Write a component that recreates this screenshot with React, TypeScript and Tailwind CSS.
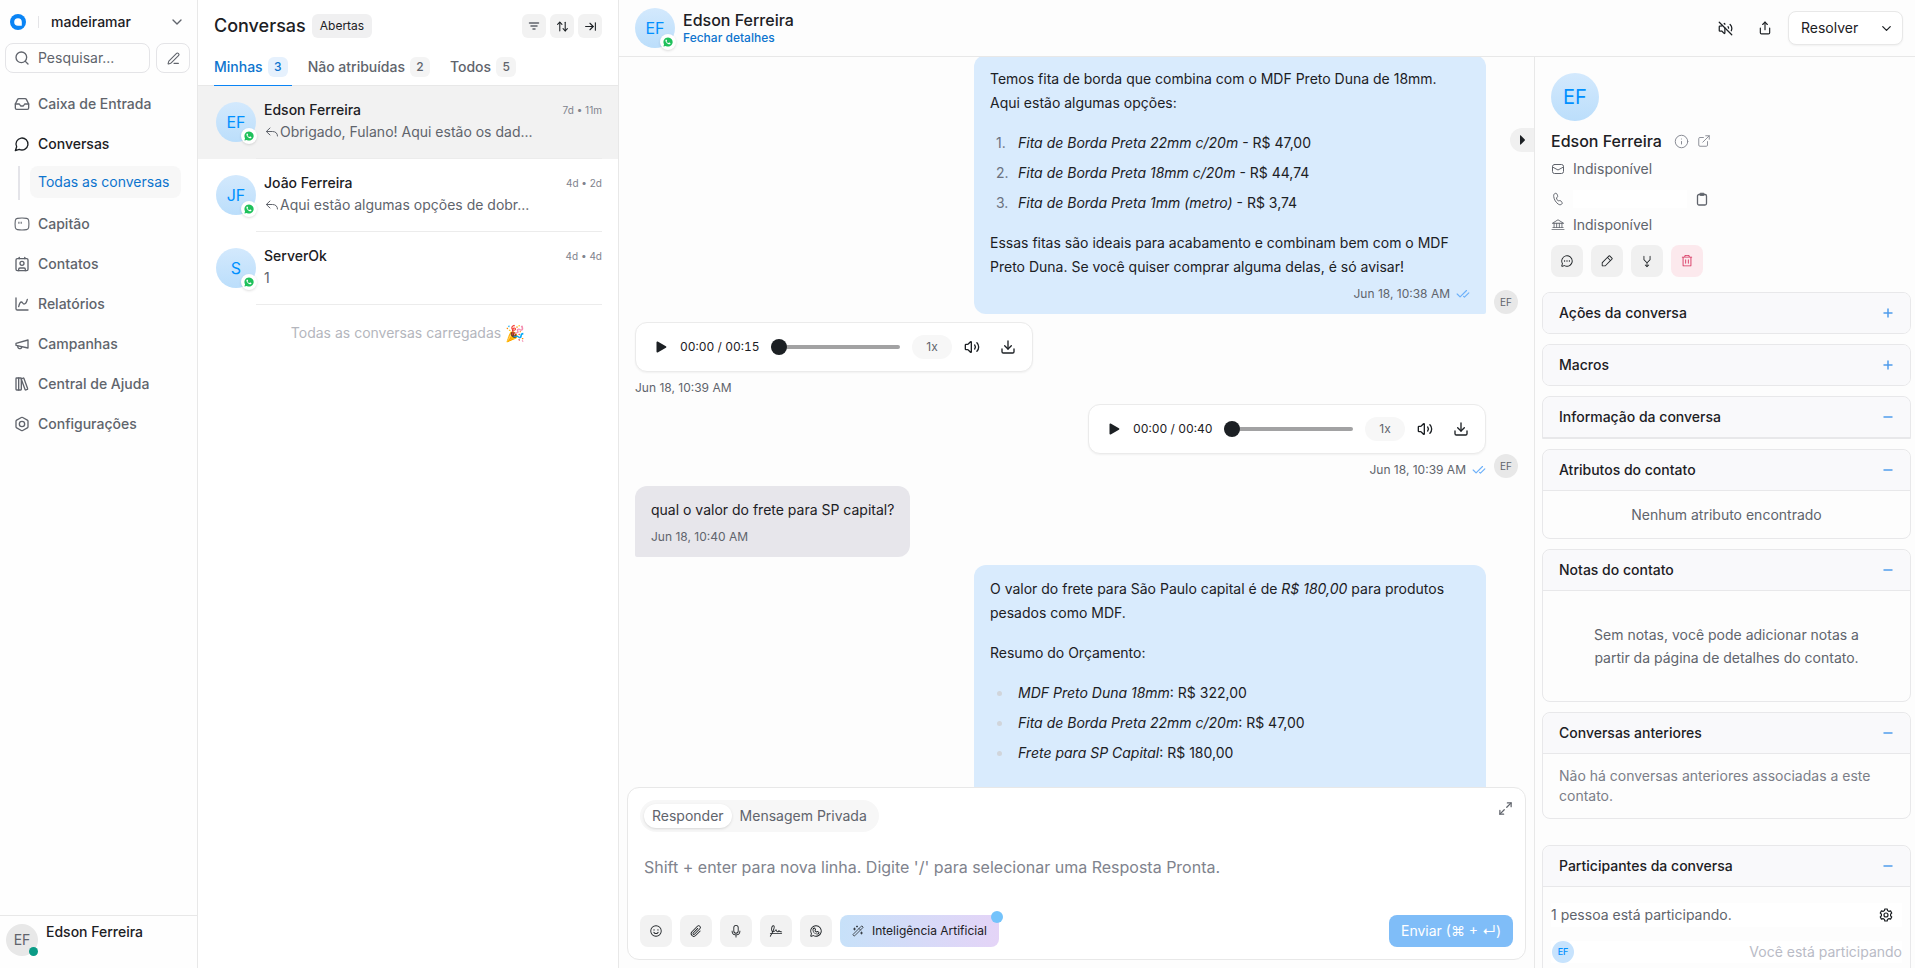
import type { ReactNode } from 'react'
import {
  ArrowRightToLine,
  ArrowUpDown,
  Bolt,
  ChartSpline,
  CheckCheck,
  ChevronDown,
  Contact,
  Download,
  ExternalLink,
  Inbox,
  Info,
  LibraryBig,
  Maximize2,
  PenLine,
  Search,
  Share,
  Volume2,
  VolumeOff,
  WandSparkles,
} from 'lucide-react'
import {
  PiArrowsMerge,
  PiBank,
  PiChatCircleDots,
  PiMicrophone,
  PiPaperclip,
  PiPencilSimple,
  PiSignature,
  PiSmiley,
  PiTrash,
  PiWhatsappLogo,
} from 'react-icons/pi'

/* ---------- icons ---------- */

function LogoIcon() {
  return (
    <svg viewBox="0 0 16 16" className="size-4" aria-hidden="true">
      <circle cx="8" cy="8" r="8" fill="#0a84f5" />
      <path d="M8 4.2a3.8 3.8 0 1 0 0 7.6h3.3a.5.5 0 0 0 .5-.5V8A3.8 3.8 0 0 0 8 4.2z" fill="#fff" />
    </svg>
  )
}

function MessageIcon() {
  return (
    <svg viewBox="0 0 24 24" className="size-4" fill="none" stroke="currentColor" strokeWidth="2" strokeLinecap="round" strokeLinejoin="round">
      <path d="M7.9 20A9 9 0 1 0 4 16.1L2 22Z" />
    </svg>
  )
}

function CaptainIcon() {
  return (
    <svg viewBox="0 0 16 16" className="size-4" fill="none" stroke="currentColor" strokeWidth="1.1">
      <path d="M3.4 2.4C6.4 1.9 9.6 1.9 12.6 2.4c1.2.2 1.9.9 2.1 2.1.3 2.3.3 4.7 0 7-.2 1.2-.9 1.9-2.1 2.1-3 .5-6.2.5-9.2 0-1.2-.2-1.9-.9-2.1-2.1-.3-2.3-.3-4.7 0-7 .2-1.2.9-1.9 2.1-2.1z" />
      <path d="M4.9 5.8v2M7.2 5.800v2" />
    </svg>
  )
}

function MegaphoneIcon() {
  return (
    <svg viewBox="0 0 24 24" className="size-4" fill="none" stroke="currentColor" strokeWidth="2" strokeLinecap="round" strokeLinejoin="round">
      <path d="m3 11 18-5v12L3 14v-3z" />
      <path d="M11.6 16.8a3 3 0 1 1-5.8-1.6" />
    </svg>
  )
}

function FilterIcon() {
  return (
    <svg viewBox="0 0 16 16" className="size-4" fill="none" stroke="currentColor" strokeWidth="1.5" strokeLinecap="round">
      <path d="M3.5 5h9M5 8h6M7 11h2" />
    </svg>
  )
}

function ReplyIcon() {
  return (
    <svg viewBox="0 0 16 16" className="size-4" fill="none" stroke="currentColor" strokeWidth="1" strokeLinecap="round" strokeLinejoin="round">
      <path d="M6 4 2.3 7.5 6 11M2.5 7.5H8.500c3 0 5 1.700 5 4.500" />
    </svg>
  )
}

function WhatsappBadge() {
  return (
    <span className="absolute -right-px -bottom-0.5 flex size-4 items-center justify-center rounded-full bg-white shadow-sm">
      <svg viewBox="0 0 24 24" className="size-2.5" aria-hidden="true">
        <path d="M12 1a11 11 0 0 0-9.5 16.5L1 23l5.6-1.5A11 11 0 1 0 12 1z" fill="#1fc15b" />
        <path d="M8.5 6.5c-.4-.8-1.2-.7-1.8 0-1.1 1.2-1.2 3 .1 5.1 1.5 2.6 3.7 4.7 6.6 5.7 2 .7 3.8.2 4.5-1.7.3-.9.1-1.2-.4-1.5l-2.1-1c-.5-.2-.8-.1-1.1.3l-.8 1c-.3.3-.6.3-1 .1-1.6-.7-2.9-1.9-3.7-3.4-.2-.4-.1-.6.2-.9l.6-.8c.2-.3.2-.6.1-.9z" fill="#fff" />
      </svg>
    </span>
  )
}

function MailIcon() {
  return (
    <svg viewBox="0 0 14 14" className="size-3.5" fill="none" stroke="currentColor" strokeWidth="1" strokeLinecap="round">
      <rect x="1.500" y="2.500" width="11" height="9" rx="2" />
      <path d="M1.5 5 7 8l5.5-3" />
    </svg>
  )
}

function PhoneIcon() {
  return (
    <svg viewBox="0 0 14 14" className="size-3.5" fill="none" stroke="currentColor" strokeWidth="1" strokeLinejoin="round">
      <path d="M4.2 1.4c.9-.3 1.5 0 1.8.8l.6 1.5c.2.6.1 1-.3 1.4l-.9.9c.3 1.2 1 2.2 2 3l1.3-.4c.5-.1 1 .1 1.3.5l.9 1.2c.5.7.4 1.3-.2 1.8-.9.8-2.1.9-3.3.1C4.8 10.4 3.1 7.6 2.7 4.4c-.2-1.5.3-2.6 1.5-3z" />
    </svg>
  )
}

function ClipboardIcon() {
  return (
    <svg viewBox="0 0 14 14" className="size-3.5" fill="none" stroke="currentColor" strokeWidth="1.3" strokeLinejoin="round">
      <rect x="2.5" y="2.5" width="9" height="10.5" rx="1.5" />
      <rect x="4.7" y="1.2" width="4.6" height="2.3" rx="1" fill="currentColor" strokeWidth="0.8" />
    </svg>
  )
}

function GearIcon() {
  return (
    <svg viewBox="0 0 24 24" className="size-4" fill="none" stroke="currentColor" strokeWidth="1.8" strokeLinejoin="round">
      <path d="M9.7 5.3 10.2 3h3.6l.5 2.3 2.2 1.3 2.3-.8 1.8 3.2L18.9 10.7v2.6l1.700 1.700-1.800 3.200-2.300-.8-2.200 1.300-.5 2.300h-3.600l-.5-2.300-2.200-1.300-2.300.8L3.400 15l1.700-1.700v-2.600L3.400 9l1.800-3.200 2.300.8z" />
      <circle cx="12" cy="12" r="3" />
    </svg>
  )
}

/* ---------- shared pieces ---------- */

function Avatar({ initials }: { initials: string }) {
  return (
    <div className="relative flex size-10 shrink-0 items-center justify-center rounded-full bg-gradient-to-b from-[#d3e9fd] to-[#bbdefb] text-base font-[440] text-[#0090ff]">
      {initials}
      <WhatsappBadge />
    </div>
  )
}

function AgentAvatar() {
  return (
    <div className="flex size-6 shrink-0 items-center justify-center rounded-full bg-[#e8e8e8] text-[10px] text-[#60646c]">
      EF
    </div>
  )
}

/* ---------- sidebar ---------- */

const navBefore = [{ label: 'Caixa de Entrada', icon: <Inbox size={16} /> }]

const navAfter = [
  { label: 'Capitão', icon: <CaptainIcon /> },
  { label: 'Contatos', icon: <Contact size={16} /> },
  { label: 'Relatórios', icon: <ChartSpline size={16} /> },
  { label: 'Campanhas', icon: <MegaphoneIcon /> },
  { label: 'Central de Ajuda', icon: <LibraryBig size={16} /> },
  { label: 'Configurações', icon: <Bolt size={16} /> },
]

function NavItem({ label, icon, active }: { label: string; icon: ReactNode; active?: boolean }) {
  return (
    <a
      href="#"
      className={
        active
          ? 'flex h-8 items-center gap-2 px-2 text-sm font-medium text-[#1c2024]'
          : 'flex h-8 items-center gap-2 px-2 text-sm font-medium text-[#60646c]'
      }
    >
      {icon}
      {label}
    </a>
  )
}

function Sidebar() {
  return (
    <aside className="flex w-[198px] shrink-0 flex-col border-r border-[#e8e8e8] bg-[#fefefe]">
      <div className="flex h-11 items-center pr-3 pl-2.5">
        <LogoIcon />
        <span className="mx-3 h-3 w-px bg-[#e4e4e7]" />
        <button type="button" className="flex flex-1 items-center justify-between text-sm font-medium text-[#1c2024]">
          madeiramar
          <ChevronDown size={16} className="text-[#60646c]" />
        </button>
      </div>

      <div className="-mt-px flex gap-1.5 px-[5px]">
        <label className="flex h-[30px] min-w-0 flex-1 items-center gap-2 rounded-lg border border-[#e4e4e7] px-2 text-[#60646c]">
          <Search size={16} className="shrink-0" />
          <input
            type="text"
            aria-label="Pesquisar"
            placeholder="Pesquisar..."
            className="w-full min-w-0 text-sm outline-none placeholder:text-[#60646c]"
          />
        </label>
        <button type="button" aria-label="Nova conversa" className="mr-0.5 flex h-[30px] w-[34px] items-center justify-center rounded-lg border border-[#e4e4e7] text-[#60646c]">
          <PenLine size={13} />
        </button>
      </div>

      <nav className="mt-[15px] flex flex-1 flex-col gap-2 px-1.5">
        {navBefore.map((item) => (
          <NavItem key={item.label} label={item.label} icon={item.icon} />
        ))}
        <div>
          <NavItem label="Conversas" icon={<MessageIcon />} active />
          <div className="mt-1.5 ml-3 flex gap-2.5">
            <span className="h-[34px] w-0.5 bg-[#e4e4e9]" />
            <a href="#" className="flex h-8 items-center rounded-lg bg-[#f7f7f7] px-2 text-sm text-[#0d74ce] whitespace-nowrap">
              <span className="pr-1">Todas as conversas</span>
            </a>
          </div>
        </div>
        {navAfter.map((item) => (
          <NavItem key={item.label} label={item.label} icon={item.icon} />
        ))}
      </nav>

      <div className="flex h-[53px] items-start gap-2 border-t border-[#e8e8e8] px-1.5 pt-2">
        <div className="relative flex size-8 items-center justify-center rounded-full bg-[#e8e8e8] text-sm text-[#60646c]">
          EF
          <span className="absolute right-0 bottom-0 size-[9px] rounded-full bg-[#0a9b86]" />
        </div>
        <span className="text-sm leading-4 font-medium text-[#1c2024]">Edson Ferreira</span>
      </div>
    </aside>
  )
}

/* ---------- conversation list ---------- */

const tabs = [
  { label: 'Minhas', count: 3, active: true },
  { label: 'Não atribuídas', count: 2, active: false },
  { label: 'Todos', count: 5, active: false },
]

const conversations = [
  { initials: 'EF', name: 'Edson Ferreira', time: '7d • 11m', text: 'Obrigado, Fulano! Aqui estão os dad...', reply: true, active: true },
  { initials: 'JF', name: 'João Ferreira', time: '4d • 2d', text: 'Aqui estão algumas opções de dobr...', reply: true, active: false },
  { initials: 'S', name: 'ServerOk', time: '4d • 4d', text: '1', reply: false, active: false },
]

function ConversationList() {
  return (
    <section className="flex w-[421px] shrink-0 flex-col border-r border-[#e8e8e8] bg-white">
      <div className="flex h-[52px] items-center justify-between px-4">
        <div className="flex items-center gap-1.5">
          <h1 className="text-lg font-medium text-[#1c2024]">Conversas</h1>
          <span className="rounded-md bg-[#f0f0f1] px-2 text-xs leading-6 text-[#1c2024]">Abertas</span>
        </div>
        <div className="flex gap-1 text-[#1c2024]">
          <button type="button" aria-label="Filtrar" className="flex size-6 items-center justify-center rounded-md bg-[#f2f2f2] text-[#60646c]">
            <FilterIcon />
          </button>
          <button type="button" aria-label="Ordenar" className="flex size-6 items-center justify-center rounded-md bg-[#f2f2f2]">
            <ArrowUpDown size={13} />
          </button>
          <button type="button" aria-label="Expandir" className="flex size-6 items-center justify-center rounded-md bg-[#f2f2f2]">
            <ArrowRightToLine size={13} />
          </button>
        </div>
      </div>

      <div className="flex gap-4 border-b border-[#e8e8e8] px-4">
        {tabs.map((tab) => (
          <button
            key={tab.label}
            type="button"
            className={
              tab.active
                ? '-mb-px flex h-[34px] items-center gap-[5px] border-b border-[#0a84f5] pt-[5px] pr-1 pb-2 text-sm font-[460] text-[#0d74ce]'
                : '-mb-px flex h-[34px] items-center gap-[5px] border-b border-transparent pt-[5px] pr-1 pb-2 text-sm font-[460] text-[#60646c]'
            }
          >
            {tab.label}
            <span
              className={
                tab.active
                  ? 'flex size-5 items-center justify-center rounded-md bg-[#e6f1fd] text-xs font-medium'
                  : 'flex size-5 items-center justify-center rounded-md bg-[#f4f4f4] text-xs font-medium'
              }
            >
              {tab.count}
            </span>
          </button>
        ))}
      </div>

      <ul>
        {conversations.map((item) => (
          <li
            key={item.name}
            className={item.active ? 'flex h-[73px] bg-[#f2f2f2] pr-4 pl-[18px]' : 'flex h-[73px] pr-4 pl-[18px]'}
          >
            <div className="pt-4">
              <Avatar initials={item.initials} />
            </div>
            <div className="min-w-0 flex-1 border-b border-[#ececec] pt-3.5 pl-2">
              <div className="flex items-center justify-between">
                <h2 className="text-sm leading-5 font-medium text-[#1c2024]">{item.name}</h2>
                <span className="text-[10px] text-[#80838d]">{item.time}</span>
              </div>
              <p className="mt-0.5 flex items-center text-sm leading-5 text-[#60646c]">
                {item.reply && <ReplyIcon />}
                {item.text}
              </p>
            </div>
          </li>
        ))}
      </ul>

      <p className="flex h-6 items-center justify-center gap-1 mt-4 text-sm text-[#b4b6bd]">
        Todas as conversas carregadas
        <span className="text-base">🎉</span>
      </p>
    </section>
  )
}

/* ---------- chat ---------- */

function Timestamp({ time, read }: { time: string; read?: boolean }) {
  return (
    <span className="flex items-center gap-1.5 text-xs leading-4 text-[#60646c]">
      {time}
      {read && <CheckCheck size={14} className="text-[#6db1fa]" />}
    </span>
  )
}

function AudioPlayer({ duration }: { duration: string }) {
  return (
    <div className="flex h-[50px] w-[398px] items-center gap-3 rounded-xl border border-[#ebebeb] bg-white px-4 text-[#1c2024] shadow-xs">
      <button type="button" aria-label="Reproduzir">
        <svg viewBox="0 0 16 16" className="size-4" fill="currentColor">
          <path d="M4.5 3.2c0-.6.6-1 1.2-.7l8.2 4.700c.6.300.6 1.200 0 1.500l-8.200 4.700c-.6.300-1.200-.1-1.200-.7z" />
        </svg>
      </button>
      <span className="text-xs whitespace-nowrap tabular-nums">00:00 / {duration}</span>
      <input
        type="range"
        aria-label="Posição do áudio"
        defaultValue={0}
        className="h-4 min-w-0 flex-1 appearance-none bg-transparent [&::-webkit-slider-runnable-track]:h-1 [&::-webkit-slider-runnable-track]:rounded-full [&::-webkit-slider-runnable-track]:bg-[#a2a2a3] [&::-webkit-slider-thumb]:-mt-1.5 [&::-webkit-slider-thumb]:size-4 [&::-webkit-slider-thumb]:appearance-none [&::-webkit-slider-thumb]:rounded-full [&::-webkit-slider-thumb]:bg-[#1c2024]"
      />
      <button type="button" className="h-6 w-10 rounded-full bg-[#f7f7f7] text-xs text-[#60646c]">
        1x
      </button>
      <button type="button" aria-label="Volume">
        <Volume2 size={16} />
      </button>
      <button type="button" aria-label="Baixar" className="ml-2">
        <Download size={16} />
      </button>
    </div>
  )
}

const borderOptions = [
  { name: 'Fita de Borda Preta 22mm c/20m', price: 'R$ 47,00' },
  { name: 'Fita de Borda Preta 18mm c/20m', price: 'R$ 44,74' },
  { name: 'Fita de Borda Preta 1mm (metro)', price: 'R$ 3,74' },
]

const budget = [
  { name: 'MDF Preto Duna 18mm', price: 'R$ 322,00' },
  { name: 'Fita de Borda Preta 22mm c/20m', price: 'R$ 47,00' },
  { name: 'Frete para SP Capital', price: 'R$ 180,00' },
]

function Messages() {
  return (
    <div className="flex min-h-0 flex-1 flex-col justify-end gap-2 overflow-hidden px-4 text-sm leading-6 text-[#1c2024]">
      <div className="flex shrink-0 items-end justify-end gap-2">
        <div className="w-full max-w-lg rounded-xl rounded-br-xs bg-[#d9ebfd] px-4 py-3">
          <div className="flex flex-col gap-4">
            <p>Temos fita de borda que combina com o MDF Preto Duna de 18mm. Aqui estão algumas opções:</p>
            <ol className="flex list-none flex-col gap-1.5">
              {borderOptions.map((item, index) => (
                <li key={item.name} className="flex pl-1.5">
                  <span className="w-[22px] text-[#6b7280]">{index + 1}.</span>
                  <span>
                    <em>{item.name}</em> - {item.price}
                  </span>
                </li>
              ))}
            </ol>
            <p>Essas fitas são ideais para acabamento e combinam bem com o MDF Preto Duna. Se você quiser comprar alguma delas, é só avisar!</p>
          </div>
          <div className="mt-[7px] flex justify-end">
            <Timestamp time="Jun 18, 10:38 AM" read />
          </div>
        </div>
        <AgentAvatar />
      </div>

      <div className="flex shrink-0 flex-col items-start gap-2">
        <AudioPlayer duration="00:15" />
        <Timestamp time="Jun 18, 10:39 AM" />
      </div>

      <div className="flex shrink-0 items-end justify-end gap-2">
        <div className="flex flex-col items-end gap-2">
          <AudioPlayer duration="00:40" />
          <Timestamp time="Jun 18, 10:39 AM" read />
        </div>
        <AgentAvatar />
      </div>

      <div className="shrink-0 self-start rounded-xl rounded-bl-xs bg-[#e7e6eb] px-4 py-3">
        <p>qual o valor do frete para SP capital?</p>
        <div className="mt-[7px]">
          <Timestamp time="Jun 18, 10:40 AM" />
        </div>
      </div>

      <div className="mr-8 flex w-full max-w-lg shrink-0 flex-col gap-4 self-end rounded-t-xl bg-[#d9ebfd] px-4 pt-3 pb-[22px]">
        <p>
          O valor do frete para São Paulo capital é de <em>R$ 180,00</em> para produtos pesados como MDF.
        </p>
        <p>Resumo do Orçamento:</p>
        <ul className="flex flex-col gap-1.5">
          {budget.map((item) => (
            <li key={item.name} className="flex items-center pl-[7px]">
              <span className="mr-4 size-[5px] rounded-full bg-[#d1d5db]" />
              <span>
                <em>{item.name}</em>: {item.price}
              </span>
            </li>
          ))}
        </ul>
      </div>
    </div>
  )
}

const composerTools = [
  { label: 'Emoji', icon: <PiSmiley size={14} /> },
  { label: 'Anexar arquivo', icon: <PiPaperclip size={14} /> },
  { label: 'Gravar áudio', icon: <PiMicrophone size={14} /> },
  { label: 'Assinatura', icon: <PiSignature size={14} /> },
  { label: 'Modelos do WhatsApp', icon: <PiWhatsappLogo size={14} /> },
]

function Composer() {
  return (
    <div className="mx-2 mb-2 flex flex-col rounded-xl border border-[#e8e8e8] bg-white p-3">
      <div className="flex items-start justify-between">
        <div className="flex h-8 items-center rounded-full bg-[#f7f7f7] p-1 pr-3 text-sm font-[440] text-[#60646c]">
          <button type="button" className="h-6 rounded-full bg-white px-2 shadow-sm">
            Responder
          </button>
          <button type="button" className="h-6 pl-2">
            Mensagem Privada
          </button>
        </div>
        <button type="button" aria-label="Expandir editor" className="mt-px text-[#60646c]">
          <Maximize2 size={15} />
        </button>
      </div>
      <textarea
        aria-label="Mensagem"
        rows={2}
        placeholder="Shift + enter para nova linha. Digite '/' para selecionar uma Resposta Pronta."
        className="mt-[23px] mb-3 h-12 w-full resize-none px-1 text-base leading-6 text-[#1c2024] outline-none placeholder:text-[#80838d]"
      />
      <div className="flex items-center justify-between">
        <div className="flex gap-2">
          {composerTools.map((tool) => (
            <button
              key={tool.label}
              type="button"
              aria-label={tool.label}
              className="flex size-8 items-center justify-center rounded-lg bg-[#f2f2f2] text-[#1c2024]"
            >
              {tool.icon}
            </button>
          ))}
          <button
            type="button"
            className="relative flex h-8 items-center gap-2 rounded-lg bg-gradient-to-r from-[#c7e1f9] to-[#e4d4f7] px-3 text-xs font-[440] text-[#1c2024]"
          >
            <WandSparkles size={12} strokeWidth={1.5} />
            Inteligência Artificial
            <span className="absolute -top-1 -right-1 size-3 rounded-full bg-[#74c3fb]" />
          </button>
        </div>
        <button type="button" className="h-8 rounded-lg bg-[#7fbdf8] px-3 text-sm text-white">
          Enviar (⌘ + ↵)
        </button>
      </div>
    </div>
  )
}

/* ---------- contact details ---------- */

function Accordion({ title, open, children }: { title: string; open?: boolean; children?: ReactNode }) {
  return (
    <div
      className={
        open && !children
          ? 'rounded-t-lg border border-[#e8e8ea] bg-[#f9f9fb]'
          : 'overflow-hidden rounded-lg border border-[#e8e8ea] bg-[#fdfdfd]'
      }
    >
      <button
        type="button"
        aria-expanded={!!open}
        className={
          open
            ? 'flex h-[41px] w-full items-center justify-between rounded-t-lg border-b border-[#e8e8ea] bg-[#f9f9fb] px-4 text-sm font-medium text-[#1c2024]'
            : 'flex h-10 w-full items-center justify-between bg-[#f9f9fb] px-4 text-sm font-medium text-[#1c2024]'
        }
      >
        {title}
        <svg viewBox="0 0 12 12" className="size-3" stroke="#4f9cec" strokeWidth="1.5">
          <path d={open ? 'M1.5 6h9' : 'M1.5 6h9M6 1.5v9'} />
        </svg>
      </button>
      {children}
    </div>
  )
}

function ContactPanel() {
  return (
    <aside className="w-[381px] shrink-0 overflow-hidden border-l border-[#e8e8e8]">
      <div className="px-4 pt-4">
        <div className="flex size-12 items-center justify-center rounded-full bg-gradient-to-b from-[#d3e9fd] to-[#bbdefb] text-xl font-[440] text-[#0090ff]">
          EF
        </div>
        <div className="mt-2 flex h-6 items-center text-base font-medium text-[#1c2024]">
          Edson Ferreira
          <Info size={15} strokeWidth={1.5} className="mr-2 ml-3 text-[#80838d]" />
          <a href="#" aria-label="Abrir contato">
            <ExternalLink size={14} strokeWidth={1.5} className="text-[#80838d]" />
          </a>
        </div>
        <div className="mt-1.5 flex h-5 items-center gap-2 text-sm text-[#60646c]">
          <MailIcon />
          Indisponível
        </div>
        <div className="mt-2 flex h-6 items-center gap-2 text-sm text-[#60646c]">
          <PhoneIcon />
          <span className="h-[18px] w-[114px] bg-white" />
          <button type="button" aria-label="Copiar telefone">
            <ClipboardIcon />
          </button>
        </div>
        <div className="mt-1 flex h-5 items-center gap-2 text-sm text-[#60646c]">
          <PiBank size={14} />
          Indisponível
        </div>
        <div className="mt-2.5 flex gap-2 text-[#1c2024]">
          <button type="button" aria-label="Nova mensagem" className="flex size-8 items-center justify-center rounded-lg bg-[#f0f0f0]">
            <PiChatCircleDots size={14} />
          </button>
          <button type="button" aria-label="Editar contato" className="flex size-8 items-center justify-center rounded-lg bg-[#f0f0f0]">
            <PiPencilSimple size={14} />
          </button>
          <button type="button" aria-label="Mesclar contato" className="flex size-8 items-center justify-center rounded-lg bg-[#f0f0f0]">
            <PiArrowsMerge size={14} />
          </button>
          <button type="button" aria-label="Excluir contato" className="flex size-8 items-center justify-center rounded-lg bg-[#fce9ed] text-[#d6305c]">
            <PiTrash size={14} />
          </button>
        </div>
      </div>

      <div className="mt-[15px] flex flex-col gap-2.5 pr-1 pl-[7px] text-sm text-[#60646c]">
        <Accordion title="Ações da conversa" />
        <Accordion title="Macros" />
        <Accordion title="Informação da conversa" open />
        <Accordion title="Atributos do contato" open>
          <p className="py-3 text-center leading-[23px]">Nenhum atributo encontrado</p>
        </Accordion>
        <Accordion title="Notas do contato" open>
          <p className="px-12 py-8 text-center leading-[23px]">
            Sem notas, você pode adicionar notas a partir da página de detalhes do contato.
          </p>
        </Accordion>
        <Accordion title="Conversas anteriores" open>
          <p className="px-4 py-3 leading-5 text-[#7b7e88]">
            Não há conversas anteriores associadas a este contato.
          </p>
        </Accordion>
        <div className="pt-4">
          <Accordion title="Participantes da conversa" open>
            <div className="px-2 py-4">
              <div className="flex h-6 items-center justify-between bg-white">
                <span className="leading-5">1 pessoa está participando.</span>
                <button type="button" aria-label="Gerenciar participantes" className="flex size-8 items-center justify-center text-[#1c2024]">
                  <GearIcon />
                </button>
              </div>
              <div className="mt-3.5 flex items-center justify-between bg-white pl-px">
                <span className="flex size-[22px] items-center justify-center rounded-full bg-[#c7e3fd] text-[9px] font-medium text-[#0090ff]">
                  EF
                </span>
                <span className="text-[#b9bbc6]">Você está participando</span>
              </div>
            </div>
          </Accordion>
        </div>
      </div>
    </aside>
  )
}

export default function App() {
  return (
    <div className="flex h-screen overflow-hidden bg-[#fdfdfd] font-[Inter,sans-serif] antialiased">
      <Sidebar />
      <ConversationList />

      <main className="flex min-w-0 flex-1 flex-col">
        <header className="flex h-[57px] shrink-0 items-center justify-between border-b border-[#e8e8e8] pr-3 pl-4">
          <div className="flex items-center gap-2">
            <Avatar initials="EF" />
            <div>
              <h2 className="text-base leading-5 font-medium text-[#1c2024]">Edson Ferreira</h2>
              <a href="#" className="block text-xs leading-4 font-medium text-[#0d74ce]">
                Fechar detalhes
              </a>
            </div>
          </div>
          <div className="flex items-center text-[#1c2024]">
            <button type="button" aria-label="Silenciar" className="flex size-10 items-center justify-center">
              <VolumeOff size={15} />
            </button>
            <button type="button" aria-label="Compartilhar" className="flex size-10 items-center justify-center">
              <Share size={14} />
            </button>
            <div className="ml-[3px] flex h-[34px] w-[115px] items-center justify-between rounded-lg border border-[#e8e8e8] bg-white pr-2 pl-3 text-sm font-[440] shadow-xs">
              <button type="button">Resolver</button>
              <button type="button" aria-label="Mais opções">
                <ChevronDown size={15} />
              </button>
            </div>
          </div>
        </header>

        <div className="flex min-h-0 flex-1">
          <div className="relative flex min-w-0 flex-1 flex-col">
            <Messages />
            <Composer />
            <button
              type="button"
              aria-label="Recolher painel"
              className="absolute top-[71px] right-0 flex h-6 w-6 items-center justify-center rounded-l-full bg-[#f0f0f0] text-[#1c2024]"
            >
              <svg viewBox="0 0 12 12" className="size-3" fill="currentColor">
                <path d="M4 1.8v8.4c0 .4.5.6.8.3l4-4.1c.2-.2.2-.6 0-.8l-4-4.1c-.3-.3-.8-.1-.8.3z" />
              </svg>
            </button>
          </div>
          <ContactPanel />
        </div>
      </main>
    </div>
  )
}
